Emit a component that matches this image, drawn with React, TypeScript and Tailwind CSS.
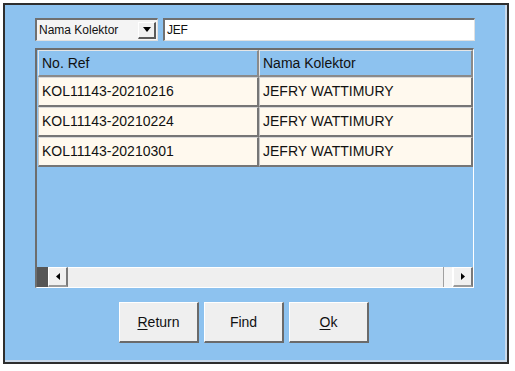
import React from "react";

const font = { fontFamily: '"Liberation Sans", Arial, sans-serif' };

function Cell({ children, w }: { children: React.ReactNode; w: string }) {
  return (
    <div
      className={`${w} h-full flex items-center pl-[3px] bg-[#FFF9EE] border-l border-t border-l-[#c4c4c4] border-t-[#d8d8d8] border-r-2 border-b-2 border-r-[#767676] border-b-[#767676] text-[14px] text-[#111] whitespace-nowrap overflow-hidden`}
    >
      {children}
    </div>
  );
}

function HeadCell({ children, w }: { children: React.ReactNode; w: string }) {
  return (
    <div
      className={`${w} h-full flex items-center pl-[3px] bg-[#8DC2EF] border-l border-t border-l-[#e6e6e6] border-t-[#e6e6e6] border-r-2 border-b-2 border-r-[#8a8a8a] border-b-[#8a8a8a] text-[14px] text-[#111] whitespace-nowrap overflow-hidden`}
    >
      {children}
    </div>
  );
}

function Btn({ children }: { children: React.ReactNode }) {
  return (
    <button className="w-[80px] h-[41px] flex items-center justify-center bg-[#efefef] border-l border-t border-white border-r-2 border-b-2 border-r-[#6a6a6a] border-b-[#6a6a6a] text-[14px] text-[#111]">
      {children}
    </button>
  );
}

const rows = [
  ["KOL11143-20210216", "JEFRY WATTIMURY"],
  ["KOL11143-20210224", "JEFRY WATTIMURY"],
  ["KOL11143-20210301", "JEFRY WATTIMURY"],
];

export default function App() {
  return (
    <div className="w-[515px] h-[371px] bg-white pt-[3px] pl-[3px]" style={font}>
      <div className="w-[506px] h-[361px] border-2 border-[#2e2e2e] bg-[#8DC2EF] shadow-[inset_-2px_-2px_0_#c9d9ea] pl-[30px] pt-[13px] flex flex-col">
        {/* top row */}
        <div className="flex gap-[5px] h-[23px]">
          <div className="w-[123px] h-full bg-[#f4f4f4] border-l-2 border-t-2 border-l-[#707070] border-t-[#707070] border-r border-b border-r-[#e0e0e0] border-b-[#e0e0e0] flex items-center justify-between pl-[2px] pr-[1px]">
            <span className="text-[12px] text-[#111] leading-none">Nama Kolektor</span>
            <div className="w-[18px] h-[17px] bg-[#f0f0f0] border-l border-t border-white border-r-2 border-b-2 border-r-[#5a5a5a] border-b-[#5a5a5a] flex items-center justify-center">
              <svg width="8" height="5" viewBox="0 0 8 5">
                <path d="M0 0H8L4 5Z" fill="#000" />
              </svg>
            </div>
          </div>
          <div className="w-[312px] h-full bg-white border-l-2 border-t-2 border-l-[#707070] border-t-[#707070] border-r border-b border-r-[#e0e0e0] border-b-[#e0e0e0] flex items-center pl-[2px]">
            <span className="text-[12px] text-[#111] leading-none tracking-[-0.3px]">JEF</span>
          </div>
        </div>

        {/* grid */}
        <div className="mt-[7px] w-[439px] h-[240px] border-l-2 border-t-2 border-l-[#6d6d6d] border-t-[#6d6d6d] border-r border-b border-r-white border-b-white flex flex-col">
          <div className="h-[27px] flex pl-[1px]">
            <HeadCell w="w-[221px]">No. Ref</HeadCell>
            <HeadCell w="w-[214px]">Nama Kolektor</HeadCell>
          </div>
          {rows.map((r, i) => (
            <div key={i} className="h-[30px] flex pl-[1px]">
              <Cell w="w-[221px]">{r[0]}</Cell>
              <Cell w="w-[214px]">{r[1]}</Cell>
            </div>
          ))}
          <div className="flex-1" />
          <div className="h-[20px] flex">
            <div className="w-[11px] h-full bg-[#565656]" />
            <div className="w-[20px] h-full bg-[#f0f0f0] border-l border-t border-white border-r-2 border-b-2 border-r-[#7a7a7a] border-b-[#9a9a9a] flex items-center justify-center">
              <svg width="4" height="7" viewBox="0 0 4 7">
                <path d="M4 0V7L0 3.5Z" fill="#000" />
              </svg>
            </div>
            <div className="flex-1 h-full bg-[#efefef] border-t border-white" />
            <div className="w-[10px] h-full bg-[#f4f4f4] border-l border-[#a0a0a0] border-r border-r-white" />
            <div className="w-[20px] h-full bg-[#f0f0f0] border-l border-t border-white border-r-2 border-b-2 border-r-[#7a7a7a] border-b-[#9a9a9a] flex items-center justify-center">
              <svg width="4" height="7" viewBox="0 0 4 7">
                <path d="M0 0V7L4 3.5Z" fill="#000" />
              </svg>
            </div>
          </div>
        </div>

        {/* buttons */}
        <div className="mt-[14px] pl-[84px] flex gap-[5px]">
          <Btn>
            <span><span className="underline underline-offset-2">R</span>eturn</span>
          </Btn>
          <Btn>Find</Btn>
          <Btn>
            <span><span className="underline underline-offset-2">O</span>k</span>
          </Btn>
        </div>
      </div>
    </div>
  );
}
